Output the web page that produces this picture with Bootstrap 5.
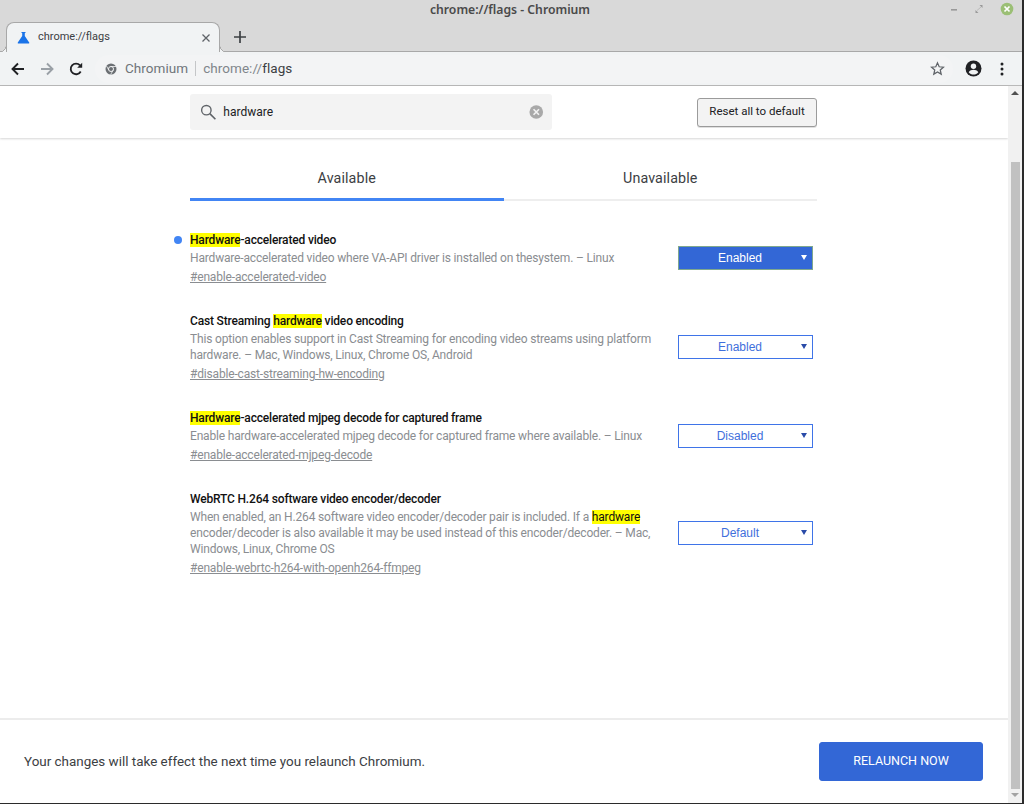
<!DOCTYPE html>
<html lang="en">
<head>
<meta charset="utf-8">
<title>chrome://flags - Chromium</title>
<link href="https://cdn.jsdelivr.net/npm/bootstrap@5.3.0/dist/css/bootstrap.min.css" rel="stylesheet">
<style>
html,body{height:804px;overflow:hidden;background:#2b2b2b}
body{font-family:Roboto,"Liberation Sans",sans-serif;width:1024px}
.win{width:1022px;height:803px;background:#fff}
.chrome-top{height:52px;background:#d9d9d9;position:relative}
.win-title{height:22px;font-size:12.2px;color:#4a4a4a;line-height:20px;font-family:"Noto Sans","Liberation Sans",sans-serif;font-weight:600;padding-right:2px}
.win-btns{position:absolute;right:8px;top:2px;gap:16px}
.strip{height:30px;padding-left:6px;border-bottom:1px solid #a8a8a8}
.page-tab{width:214px;height:30px;background:#f1f3f4;border:1px solid #a8a8a8;border-bottom:0;border-radius:8px 8px 0 0;position:relative;padding:0 8px 0 10px;font-size:11px;color:#3c4043;z-index:1}
.page-tab::before,.page-tab::after{content:"";position:absolute;bottom:0;width:6px;height:6px}
.page-tab::before{left:-7px;background:radial-gradient(circle at 0 0,transparent 5.5px,#a8a8a8 5.6px,#a8a8a8 6px,#f1f3f4 6.3px)}
.page-tab::after{right:-7px;background:radial-gradient(circle at 100% 0,transparent 5.5px,#a8a8a8 5.6px,#a8a8a8 6px,#f1f3f4 6.3px)}
.tab-label{margin-left:8px}
.plus{margin-left:13px;margin-top:1px}
.toolbar{height:34px;background:#f1f3f4;border-bottom:1px solid #b9b9b9;padding-left:10px}
.nav-gap{gap:13px}
.omni{width:858px;height:28px;margin-left:11px;background:#f3f4f5;border-radius:14px;padding-left:10px;padding-right:8px;font-size:13.5px;letter-spacing:.05px}
.omni-name{color:#70757a;margin-left:8px}
.omni-sep{width:1px;height:15px;background:#c4c6c8;margin:0 7px}
.omni-dim{color:#80868b}
.omni-strong{color:#3c4043}
.tool-right{margin-left:12px;gap:18px}
.stage{height:717px}
.page-col{width:1008px}
.scroll-col{width:14px;background:#f1f1f1;position:relative}
.scroll-spacer{height:76px}
.scroll-up{height:0;width:0;border-left:4px solid transparent;border-right:4px solid transparent;border-bottom:4px solid #505050;position:absolute;left:3px;top:5px}
.scroll-thumb{width:9px;height:627px;background:#c1c1c1;margin-left:3px}
.scroll-down{height:0;width:0;border-left:4px solid transparent;border-right:4px solid transparent;border-top:4px solid #a3a3a3;position:absolute;left:3px;bottom:6px}
.head-bar{height:52px;padding-left:190px;padding-right:191px;box-shadow:0 1px 2px rgba(0,0,0,.16)}
.search-box{width:362px;height:36px;background:#f3f3f3;border-radius:3px;padding:0 8px 0 10px}
.search-input{font-size:12px;color:#202124;background:transparent;padding:0 0 0 7px;height:20px;box-shadow:none!important}
.reset-btn{width:120px;height:29px;padding:0;font-size:11.5px;color:#202124;background:#f3f3f3;border:1px solid #9b9b9b;border-radius:3px;box-shadow:0 1px 0 rgba(0,0,0,.12)}
.flag-area{padding:0 191px 0 190px}
.tab-row{margin-top:21px;height:42px}
.tab-pane-link{display:flex;align-items:center;justify-content:center;padding:0;height:42px;font-size:14.3px;color:#3c4043;border-bottom:2px solid #eeeeee;letter-spacing:.1px}
.tab-pane-link.on,.tab-pane-link.on:hover{border-bottom:3px solid #4285f4;color:#3c4043}
.tab-pane-link:hover{color:#3c4043}
.flag-list{margin-top:31px;gap:27px}
.flag-row{position:relative}
.flag-dot{position:absolute;left:-16px;top:4px;width:8px;height:8px;border-radius:50%;background:#4285f4}
.flag-text{width:465px}
.flag-title{font-size:12px;font-weight:500;line-height:16px;color:#111;margin-bottom:2px;letter-spacing:-.17px}
.flag-desc{font-size:12px;line-height:16px;color:#8a8d91;margin-bottom:3px;letter-spacing:-.17px}
.flag-link{display:block;font-size:12px;line-height:17px;color:#8a8d91;text-decoration:underline;letter-spacing:-.17px}
mark.hit{background:#ff0;padding:0;color:#111}
.select-wrap{position:relative;width:135px;margin-right:4px;margin-bottom:3px}
.select-wrap::after{content:"";position:absolute;right:6px;top:50%;margin-top:-3px;border-left:3px solid transparent;border-right:3px solid transparent;border-top:5px solid #2a4ba8;pointer-events:none}
.select-wrap.chosen::after{border-top-color:#fff}
.flag-select{appearance:none;display:block;width:135px;height:24px;border:1px solid #3f74e8;border-radius:0;background:#fff;color:#3f6fdc;font-family:"Liberation Sans",sans-serif;font-size:12px;text-align:center;text-align-last:center;padding:0 11px 0 0;outline:0}
.chosen .flag-select{background:#3367d6;color:#fff;border-color:#7fa88e}
.foot-bar{height:85px;border-top:2px solid #ececec;padding:0 25px 0 24px}
.foot-note{font-size:13.43px;color:#3c4043;margin-top:1px}
.relaunch{width:164px;height:39px;padding:0;background:#3367d6;border:1px solid #3367d6;border-radius:3px;font-size:12.5px;color:#fff;font-weight:400}
.relaunch:hover{background:#3367d6;color:#fff;border-color:#3367d6}
</style>
</head>
<body>
<div class="win d-flex flex-column">
  <div class="chrome-top flex-shrink-0">
    <div class="win-title text-center">chrome://flags - Chromium</div>
    <div class="win-btns d-flex align-items-center">
      <svg width="8" height="14" viewBox="0 0 8 14"><rect x="1" y="7" width="6" height="1.6" fill="#999"/></svg>
      <svg width="10" height="14" viewBox="0 0 10 14"><path d="M5.5 3h3v3zM4.500 11h-3v-3z" fill="#999"/><path d="M3 8.500 7 5" stroke="#bbb" stroke-width="1"/></svg>
      <svg width="14" height="14" viewBox="0 0 14 14"><circle cx="7" cy="7" r="6.300" fill="#9bbf75"/><path d="M4.500 4.500l5 5m0-5l-5 5" stroke="#fff" stroke-width="1.700"/></svg>
    </div>
    <div class="strip d-flex align-items-start">
      <div class="page-tab d-flex align-items-center">
        <svg width="13" height="13" viewBox="0 0 13 13"><path d="M4.500 1h4v1h-.7v3l4.400 6.500c.3.600 0 1-.6 1H1.400c-.6 0-.9-.4-.6-1L5.200 5V2h-.7z" fill="#1a73e8"/></svg>
        <span class="tab-label flex-grow-1">chrome://flags</span>
        <svg width="10" height="10" viewBox="0 0 10 10"><path d="M1.500 1.500l7 7m0-7l-7 7" stroke="#5f6368" stroke-width="1.300"/></svg>
      </div>
      <svg class="plus" width="14" height="28" viewBox="0 0 14 28"><path d="M7 8v12M1 14h12" stroke="#3c4043" stroke-width="1.700"/></svg>
    </div>
  </div>
  <div class="toolbar flex-shrink-0 d-flex align-items-center">
    <div class="d-flex align-items-center nav-gap">
      <svg width="16" height="16" viewBox="0 0 16 16"><path d="M14 8H2.500M8 2.500 2.500 8 8 13.500" fill="none" stroke="#202124" stroke-width="1.900"/></svg>
      <svg width="16" height="16" viewBox="0 0 16 16"><path d="M2 8h11.500M8 2.500 13.500 8 8 13.500" fill="none" stroke="#9aa0a6" stroke-width="1.900"/></svg>
      <svg width="16" height="16" viewBox="0 0 16 16"><path d="M12.700 10.500A5.300 5.300 0 1 1 12 4.400" fill="none" stroke="#202124" stroke-width="1.800"/><path d="M14.200 1.800v5h-5z" fill="#202124"/></svg>
    </div>
    <div class="omni d-flex align-items-center">
      <svg width="12" height="12" viewBox="0 0 12 12"><circle cx="6" cy="6" r="5.500" fill="#6b6f73"/><circle cx="6" cy="6" r="2.500" fill="#6b6f73" stroke="#f3f4f5" stroke-width="1"/><path d="M6 3.500h5M3.800 7.200 1.500 3M8.200 7.200 5.700 11.400" stroke="#f3f4f5" stroke-width=".8"/></svg>
      <span class="omni-name">Chromium</span><span class="omni-sep"></span><span class="omni-dim">chrome://</span><span class="omni-strong">flags</span>
      <svg class="ms-auto" width="15" height="15" viewBox="0 0 24 24"><path d="M12 3l2.700 6.200 6.800.6-5.100 4.500 1.500 6.700-5.900-3.500L6.100 21l1.500-6.700-5.100-4.500 6.800-.6z" fill="none" stroke="#5f6368" stroke-width="2"/></svg>
    </div>
    <div class="d-flex align-items-center tool-right">
      <svg width="17" height="17" viewBox="0 0 17 17"><circle cx="8.500" cy="8.500" r="8" fill="#202124"/><circle cx="8.500" cy="6.300" r="2.700" fill="#f1f3f4"/><path d="M3.700 12.200c1-1.800 3-2.500 4.800-2.500s3.800.7 4.800 2.500c-1.100 1.500-2.900 2.400-4.800 2.400s-3.700-.9-4.800-2.400z" fill="#f1f3f4"/></svg>
      <svg width="4" height="14" viewBox="0 0 4 14"><circle cx="2" cy="2" r="1.500" fill="#202124"/><circle cx="2" cy="7" r="1.500" fill="#202124"/><circle cx="2" cy="12" r="1.500" fill="#202124"/></svg>
    </div>
  </div>
  <div class="stage d-flex">
    <div class="page-col d-flex flex-column">
      <div class="head-bar d-flex align-items-center justify-content-between flex-shrink-0">
        <div class="search-box d-flex align-items-center">
          <svg width="18" height="18" viewBox="0 0 18 18"><circle cx="7" cy="7" r="5.200" fill="none" stroke="#5f6368" stroke-width="1.500"/><path d="M10.800 10.800 17 17" stroke="#5f6368" stroke-width="1.800"/></svg>
          <input class="form-control border-0 flex-grow-1 search-input" type="text" value="hardware" aria-label="Search flags">
          <svg width="16" height="16" viewBox="0 0 16 16"><circle cx="8" cy="8" r="7.500" fill="#a9a9a9"/><path d="M5 5l6 6m0-6-6 6" stroke="#f3f3f3" stroke-width="1.800"/></svg>
        </div>
        <button class="btn reset-btn" type="button">Reset all to default</button>
      </div>
      <div class="flag-area flex-grow-1">
        <ul class="nav tab-row row g-0">
          <li class="col-6"><a class="tab-pane-link on text-decoration-none" href="#">Available</a></li>
          <li class="col-6"><a class="tab-pane-link text-decoration-none" href="#">Unavailable</a></li>
        </ul>
        <div class="flag-list d-flex flex-column">
          <div class="flag-row d-flex align-items-center justify-content-between">
            <span class="flag-dot"></span>
            <div class="flag-text">
              <div class="flag-title"><mark class="hit">Hardware</mark>-accelerated video</div>
              <div class="flag-desc">Hardware-accelerated video where VA-API driver is installed on thesystem. – Linux</div>
              <a class="flag-link" href="#">#enable-accelerated-video</a>
            </div>
            <div class="select-wrap chosen"><select class="flag-select" aria-label="Hardware-accelerated video"><option>Enabled</option></select></div>
          </div>
          <div class="flag-row d-flex align-items-center justify-content-between">
            <div class="flag-text">
              <div class="flag-title">Cast Streaming <mark class="hit">hardware</mark> video encoding</div>
              <div class="flag-desc">This option enables support in Cast Streaming for encoding video streams using platform hardware. – Mac, Windows, Linux, Chrome OS, Android</div>
              <a class="flag-link" href="#">#disable-cast-streaming-hw-encoding</a>
            </div>
            <div class="select-wrap"><select class="flag-select" aria-label="Cast Streaming hardware video encoding"><option>Enabled</option></select></div>
          </div>
          <div class="flag-row d-flex align-items-center justify-content-between">
            <div class="flag-text">
              <div class="flag-title"><mark class="hit">Hardware</mark>-accelerated mjpeg decode for captured frame</div>
              <div class="flag-desc">Enable hardware-accelerated mjpeg decode for captured frame where available. – Linux</div>
              <a class="flag-link" href="#">#enable-accelerated-mjpeg-decode</a>
            </div>
            <div class="select-wrap"><select class="flag-select" aria-label="Hardware-accelerated mjpeg decode"><option>Disabled</option></select></div>
          </div>
          <div class="flag-row d-flex align-items-center justify-content-between">
            <div class="flag-text">
              <div class="flag-title">WebRTC H.264 software video encoder/decoder</div>
              <div class="flag-desc">When enabled, an H.264 software video encoder/decoder pair is included. If a <mark class="hit">hardware</mark> encoder/decoder is also available it may be used instead of this encoder/decoder. – Mac, Windows, Linux, Chrome OS</div>
              <a class="flag-link" href="#">#enable-webrtc-h264-with-openh264-ffmpeg</a>
            </div>
            <div class="select-wrap"><select class="flag-select" aria-label="WebRTC H.264"><option>Default</option></select></div>
          </div>
        </div>
      </div>
      <div class="foot-bar d-flex align-items-center justify-content-between flex-shrink-0">
        <div class="foot-note">Your changes will take effect the next time you relaunch Chromium.</div>
        <button class="btn relaunch" type="button">RELAUNCH NOW</button>
      </div>
    </div>
    <div class="scroll-col flex-shrink-0">
      <span class="scroll-up"></span>
      <div class="scroll-spacer"></div>
      <div class="scroll-thumb"></div>
      <span class="scroll-down"></span>
    </div>
  </div>
</div>
<script src="https://cdn.jsdelivr.net/npm/bootstrap@5.3.0/dist/js/bootstrap.bundle.min.js"></script>
</body>
</html>
